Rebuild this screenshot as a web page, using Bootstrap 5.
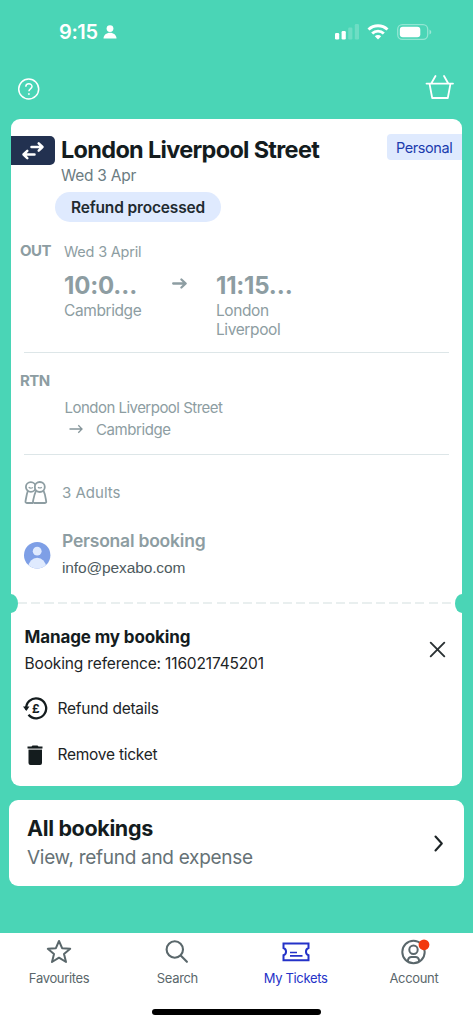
<!DOCTYPE html>
<html lang="en">
<head>
<meta charset="utf-8">
<meta name="viewport" content="width=device-width, initial-scale=1">
<title>My Tickets</title>
<link href="https://cdn.jsdelivr.net/npm/bootstrap@5.3.0/dist/css/bootstrap.min.css" rel="stylesheet">
<style>
body{background:#4ad5b6;font-family:Inter,sans-serif;font-size:15.5px;line-height:22px;letter-spacing:-.25px;color:#1d2426;height:1024px;overflow:hidden;white-space:nowrap}
svg{display:block;flex:none;overflow:visible}
.status{height:65px;padding:20px 41px 0 59px}
.clock{font-size:20px;line-height:24px;font-weight:600;letter-spacing:-.4px}
.topbar{height:54px;padding:0 18px 6px}
.ticket{margin:0 11px;height:667px;border-radius:9px;padding-top:15px}
.swap{width:44px;height:29px;background:#223150;border-radius:0 5px 5px 0;margin-top:2px}
.heading{margin:1px 0 0 6px}
.title{font-size:23.5px;line-height:30px;font-weight:700;color:#141c1e;letter-spacing:-.69px}
.sub{color:#6b7c82}
.pill{height:30px;line-height:31px;width:166px;margin:5px 0 0 44px;background:#dfeafe;font-weight:600;color:#1f2b30;letter-spacing:-.15px}
.tag{height:26px;line-height:27px;width:75px;padding-left:9px;background:#dfeafe;color:#1b3cae;border-radius:4px 0 0 4px;font-size:14.5px;letter-spacing:-.42px}
.muted{color:#8d9da2}
.leg{padding-left:9px}
.out{height:130px;padding-top:20px}
.rtn{height:101px;padding-top:18px}
.stops{margin:6px 0 0 44.5px;font-size:15px;letter-spacing:-.52px}
.lbl{width:44px;font-size:15px;line-height:20px;font-weight:700;letter-spacing:-.5px}
.day{font-size:14.5px;line-height:20px;letter-spacing:-.2px}
.clk{font-size:24px;line-height:30px;font-weight:700;letter-spacing:-.2px}
.place{line-height:18.5px;letter-spacing:-.4px;margin-top:1px}
.rule{height:1px;background:#dde6e8;margin:0 13px}
.booker{font-size:17.5px;line-height:24px;font-weight:600;letter-spacing:-.22px}
.mail{font-family:"Liberation Sans",sans-serif;font-size:15.5px;margin-top:4px;color:#4d5a5e;letter-spacing:-.13px}
.perf{height:20px;margin:14px 0 12px}
.notch{width:7px;height:19px;background:#4ad5b6;border-radius:0 7px 7px 0/0 9.5px 9.5px 0}
.notch.r{border-radius:7px 0 0 7px/9.5px 0 0 9.5px}
.dash{height:2px;background:repeating-linear-gradient(90deg,#e9efef 0 9px,transparent 9px 13.25px)}
.head2{font-size:17px;line-height:24px;font-weight:700;color:#141c1e;letter-spacing:-.12px}
.ref{margin-top:4px;letter-spacing:-.15px}
.all{margin:14px 9px 0;height:86px;border-radius:9px;padding:14px 18px 0}
.alltitle{font-size:21.5px;line-height:28px;font-weight:700;color:#141c1e;letter-spacing:-.35px}
.allsub{font-size:19px;line-height:26px;margin-top:3px;color:#667276;letter-spacing:-.29px}
.tabs{margin-top:47px;height:91px;color:#5a676b;font-size:13px;letter-spacing:-.33px}
.tabs .tab{width:118.25px;line-height:18px;padding-top:5px}
.tab svg{margin-bottom:3px}
.on{color:#2432c8}
.homebar{width:169px;height:6px;border-radius:3px;background:#000;margin-top:22px}
</style>
</head>
<body>
<div class="status d-flex justify-content-between align-items-start text-white">
  <div class="d-flex align-items-center"><span class="clock">9:15</span>
    <svg class="ms-1" width="16" height="16" viewBox="0 0 16 16" fill="#fff"><circle cx="8" cy="4.600" r="3.400"/><path d="M1.500 14.600c0-3.600 3-5.800 6.500-5.800s6.500 2.200 6.500 5.800z"/></svg></div>
  <svg width="97" height="24" viewBox="0 0 97 24" fill="#fff">
    <rect y="13" width="4.200" height="6.500" rx="1.200"/><rect x="6.600" y="11" width="4.200" height="8.500" rx="1.200"/><rect x="13.200" y="7.500" width="4.200" height="12" rx="1.200" opacity=".2"/><rect x="19.800" y="4" width="4.200" height="15.500" rx="1.200" opacity=".2"/>
    <g fill="none" stroke="#fff" stroke-width="2.900"><path d="M33.500 9.500a13.800 13.800 0 0 1 19 0"/><path d="M37.200 13.500a8.300 8.300 0 0 1 11.600 0"/></g><path d="M43 19.500l-3.200-3.300a4.600 4.600 0 0 1 6.400 0z"/>
    <rect x="62.700" y="4.700" width="30" height="14.600" rx="4.600" fill="none" stroke="#fff" stroke-width="1.300" opacity=".4"/><rect x="64.800" y="6.700" width="20.500" height="10.600" rx="3"/><path d="M94.500 9.500q1.800 1 1.800 2.500t-1.800 2.500z" opacity=".45"/>
  </svg>
</div>
<div class="topbar d-flex justify-content-between align-items-center text-white">
  <svg width="22" height="22" viewBox="0 0 22 22" fill="none" stroke="#fff" stroke-width="1.500"><circle cx="10.700" cy="11" r="10"/><path d="M7.800 8.800c0-4 6.200-3.800 6.200-.3 0 2.400-3.100 2.300-3.100 4.700"/><circle cx="10.900" cy="16" r=".6" fill="#fff" stroke-width=".8"/></svg>
  <svg width="30" height="30" viewBox="0 0 30 30" fill="none" stroke="#fff" stroke-width="1.800" stroke-linecap="round" stroke-linejoin="round"><path d="M1.500 9.600H28M4.500 9.600L7.200 24h15.600l2.700-14.400M6.500 9l4-7M23 9l-4-7"/></svg>
</div>

<main class="ticket bg-white">
  <div class="d-flex align-items-start">
    <div class="swap d-flex align-items-center justify-content-center"><svg width="22" height="20" viewBox="0 0 22 20" fill="none" stroke="#fff" stroke-width="2.500" stroke-linecap="round" stroke-linejoin="round"><path d="M9.500 6h11M16.700 2.300l3.800 3.700-3.800 3.700M12.500 13.500h-11M5.300 9.800L1.500 13.500l3.800 3.700"/></svg></div>
    <div class="heading flex-grow-1"><div class="title">London Liverpool Street</div><div class="sub">Wed 3 Apr</div></div>
    <div class="tag">Personal</div>
  </div>
  <div class="pill rounded-pill text-center">Refund processed</div>

  <section class="leg out d-flex muted">
    <div class="lbl" style="margin-top:-1px">OUT</div>
    <div>
      <div class="day">Wed 3 April</div>
      <div class="d-flex" style="margin-top:9px">
        <div style="width:107px"><div class="clk">10:0…</div><div class="place">Cambridge</div></div>
        <svg width="18" height="14" viewBox="0 0 18 14" style="margin:6px 27px 0 0" fill="none" stroke="#8d9da2" stroke-width="2.300" stroke-linecap="round" stroke-linejoin="round"><path d="M2.200 6.500h12M10.400 2.500l4.300 4-4.300 4"/></svg>
        <div><div class="clk">11:15…</div><div class="place">London<br>Liverpool</div></div>
      </div>
    </div>
  </section>
  <div class="rule"></div>
  <section class="leg rtn muted">
    <div class="lbl">RTN</div>
    <div class="stops">
      <div>London Liverpool Street</div>
      <div class="d-flex align-items-center" style="letter-spacing:-.42px"><svg width="14" height="12" viewBox="0 0 14 12" style="margin:-2px 13.500px 0 4px" fill="none" stroke="#85959a" stroke-width="1.300"><path d="M.5 6h12.500M9.300 2.300L13 6 9.300 9.700"/></svg>Cambridge</div>
    </div>
  </section>
  <div class="rule"></div>
  <div class="d-flex align-items-center muted" style="margin:26px 0 0 13px;height:24px">
    <svg width="24" height="24" viewBox="0 0 24 24" fill="none" stroke="#8d9da2" stroke-width="1.800" stroke-linejoin="round"><circle cx="6.800" cy="6" r="4.900"/><path d="M3.800 10C2.600 13 2.100 17 1.500 20.300q-.2 1.700 1.300 1.700H9"/><circle cx="15.800" cy="6" r="5" fill="#fff"/><path d="M12 9.800C10.300 13 9.700 17 9 20.300q-.2 1.700 1.300 1.700h10.700q1.500 0 1.200-1.700c-.6-3.300-1-7.300-2.600-10.500"/><path d="M4.700 6.200c1 .9 3 .9 4.200.2M14 6.200c1 .8 2.800.8 3.800 0" stroke-width="1.200"/></svg>
    <span style="margin-left:14px;font-size:15px;letter-spacing:0">3 Adults</span>
  </div>
  <div class="d-flex" style="margin:24px 0 0 13px">
    <svg width="27" height="27" viewBox="0 0 27 27" style="margin:12.500px 11px 0 0"><clipPath id="av"><circle cx="13.200" cy="13.200" r="13.200"/></clipPath><circle cx="13.200" cy="13.200" r="13.200" fill="#7e9fe6"/><g fill="#dfeafe" clip-path="url(#av)"><circle cx="13.200" cy="9.200" r="4.400"/><ellipse cx="13.200" cy="25" rx="8.800" ry="9.300"/></g></svg>
    <div><div class="booker muted">Personal booking</div>
    <div class="mail">info@pexabo.com</div></div>
  </div>
  <div class="perf d-flex align-items-center"><div class="notch"></div><div class="dash flex-grow-1"></div><div class="notch r"></div></div>
  <div class="d-flex justify-content-between" style="padding:0 16px 0 13.500px">
    <div><div class="head2">Manage my booking</div><div class="ref">Booking reference: 116021745201</div></div>
    <svg width="17" height="17" viewBox="0 0 17 17" style="margin-top:16px" fill="none" stroke="#2a3133" stroke-width="1.900" stroke-linecap="round"><path d="M1.700 1.700l13.600 13.600M15.300 1.700L1.700 15.300"/></svg>
  </div>
  <div class="d-flex align-items-center" style="margin:22px 0 0 12px;height:24px">
    <svg width="25" height="24" viewBox="0 0 25 24" style="margin-right:9.500px"><path d="M3.200 12.500A10 10 0 1 1 5.500 17.800" fill="none" stroke="#141c1e" stroke-width="2.300"/><path d="M0 9.500h6.500L3.300 14z" fill="#141c1e"/><text x="12.700" y="15.800" text-anchor="middle" font-size="12" font-weight="700" fill="#141c1e">£</text></svg>
    Refund details</div>
  <div class="d-flex align-items-center" style="margin:22px 0 0 16px;height:24px">
    <svg width="17" height="21" viewBox="0 0 17 21" style="margin-right:13.500px" fill="#141c1e"><path d="M5.500.5h5l1 1h4v2H.5v-2h4zM1.500 5H15v13q0 2-2 2H3.500q-2 0-2-2z"/><path d="M1.500 3.500H15V5H1.500z" opacity=".4"/></svg>
    Remove ticket</div>
</main>

<div class="all bg-white d-flex justify-content-between">
  <div><div class="alltitle">All bookings</div><div class="allsub">View, refund and expense</div></div>
  <svg width="10" height="17" viewBox="0 0 10 17" style="margin:21px 2px 0 0" fill="none" stroke="#1d2426" stroke-width="2.100" stroke-linecap="round" stroke-linejoin="round"><path d="M1.500 1.500l6.300 7-6.300 7"/></svg>
</div>

<nav class="tabs bg-white">
  <div class="d-flex">
    <div class="tab d-flex flex-column align-items-center"><svg width="28" height="28" viewBox="0 0 28 28" fill="none" stroke="#5a676b" stroke-width="2" stroke-linejoin="round"><path d="M14 3l3.100 7.200 8.100.6-6.200 5.100 2 8.100-7-4.300L7 24l2-8.100-6.200-5.100 8.100-.6z"/></svg>Favourites</div>
    <div class="tab d-flex flex-column align-items-center"><svg width="28" height="28" viewBox="0 0 28 28" fill="none" stroke="#5a676b" stroke-width="2.100" stroke-linecap="round"><circle cx="11.800" cy="11.500" r="8.200"/><path d="M17.700 17.400l6.200 6.400"/></svg>Search</div>
    <div class="tab on d-flex flex-column align-items-center"><svg width="28" height="28" viewBox="0 0 28 28" fill="none" stroke="#2432c8" stroke-width="2"><path d="M1.500 5.500h25V10a3.900 3.900 0 0 0 0 7.300v5h-25v-5a3.900 3.900 0 0 0 0-7.300z"/><path d="M8 14.500h7M8 17.800h12.500" stroke-width="1.700"/></svg>My Tickets</div>
    <div class="tab d-flex flex-column align-items-center"><svg width="28" height="28" viewBox="0 0 28 28" fill="none" stroke="#5a676b" stroke-width="2"><circle cx="13.500" cy="14" r="11.200"/><circle cx="13.500" cy="11.700" r="4.200"/><path d="M8 23.500v-1.500q.5-3 3.500-3h4q3 0 3.500 3v1.500"/><circle cx="24" cy="6.800" r="5.400" fill="#f2390d" stroke="none"/></svg>Account</div>
  </div>
  <div class="homebar mx-auto"></div>
</nav>
<script src="https://cdn.jsdelivr.net/npm/bootstrap@5.3.0/dist/js/bootstrap.bundle.min.js"></script>
</body>
</html>
